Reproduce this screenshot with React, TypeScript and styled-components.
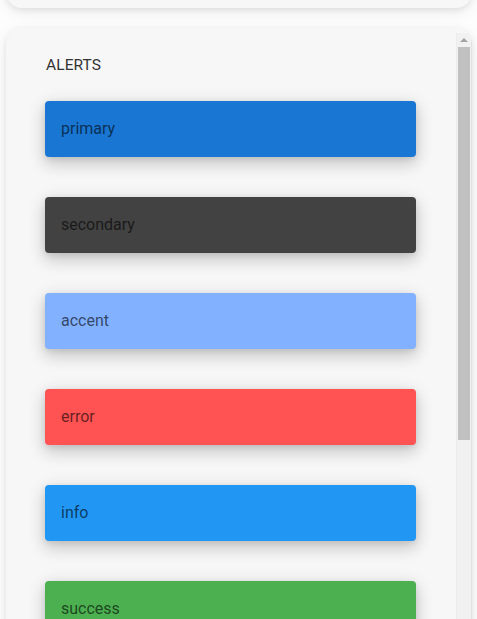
import { createGlobalStyle, styled } from "styled-components";

const GlobalStyle = createGlobalStyle`
  html, body {
    margin: 0;
    padding: 0;
    background: #fdfdfd;
    font-family: Roboto, "Liberation Sans", Arial, sans-serif;
    overflow: hidden;
  }
`;

const Page = styled.main`
  display: flex;
  flex-direction: column;
  gap: 20px;
  padding: 0 5px 0 6px;
  margin-top: -40px;
`;

const Card = styled.section<{ $height: number }>`
  display: flex;
  height: ${(p) => p.$height}px;
  background: #f7f7f7;
  border-radius: 16px;
  box-shadow: 0 2px 6px rgba(0, 0, 0, 0.08), 0 4px 16px rgba(0, 0, 0, 0.07);
  overflow: hidden;
`;

const Body = styled.div`
  flex: 1;
  min-width: 0;
  overflow: hidden;
  padding: 25px 40px 0 39px;
`;

/* the card's scroll bar, drawn since the frame hides real ones */
const ScrollTrack = styled.div`
  display: flex;
  flex-direction: column;
  align-items: center;
  width: 14px;
  margin-top: 5px;
  background: #f1f1f1;
  border-left: 1px solid #ececec;
  border-right: 1px solid #e3e3e3;
`;

const ArrowUp = styled.div`
  margin: 5px 0 5px;
  width: 0;
  height: 0;
  border-left: 4px solid transparent;
  border-right: 4px solid transparent;
  border-bottom: 4px solid #a3a3a3;
`;

const Thumb = styled.div<{ $length: number }>`
  align-self: stretch;
  margin: 0 1px;
  height: ${(p) => p.$length}px;
  background: #c1c1c1;
`;

const Title = styled.h2`
  margin: 0 0 24px 1px;
  font-size: 15.5px;
  font-weight: 400;
  line-height: 24px;
  letter-spacing: 0.1px;
  color: #333;
  text-transform: uppercase;
`;

const AlertList = styled.div`
  display: flex;
  flex-direction: column;
  gap: 40px;
`;

const Alert = styled.div<{ $color: string }>`
  height: 56px;
  box-sizing: border-box;
  padding: 16px;
  border-radius: 4px;
  background: ${(p) => p.$color};
  color: rgba(0, 0, 0, 0.62);
  font-size: 16px;
  line-height: 24px;
  box-shadow: 0 7px 16px 1px rgba(0, 0, 0, 0.15), 0 2px 6px rgba(0, 0, 0, 0.09),
    0 2px 20px 2px rgba(0, 0, 0, 0.05);
`;

const ALERTS = [
  { label: "primary", color: "#1976d2" },
  { label: "secondary", color: "#424242" },
  { label: "accent", color: "#82b1ff" },
  { label: "error", color: "#ff5252" },
  { label: "info", color: "#2196f3" },
  { label: "success", color: "#4caf50" },
  { label: "warning", color: "#fb8c00" },
];

export default function App() {
  return (
    <>
      <GlobalStyle />
      <Page>
        <Card $height={48} />
        <Card $height={640}>
          <Body>
            <Title>Alerts</Title>
            <AlertList>
              {ALERTS.map((a) => (
                <Alert key={a.label} $color={a.color}>
                  {a.label}
                </Alert>
              ))}
            </AlertList>
          </Body>
          <ScrollTrack>
            <ArrowUp />
            <Thumb $length={393} />
          </ScrollTrack>
        </Card>
      </Page>
    </>
  );
}
